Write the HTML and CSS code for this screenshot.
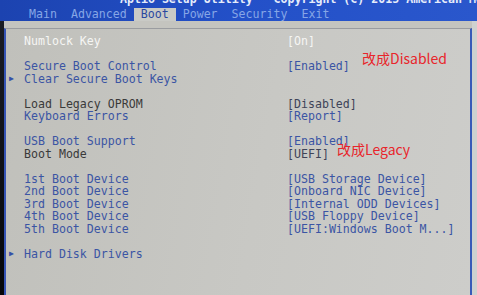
FILE: index.html
```html
<!DOCTYPE html>
<html lang="en">
<head>
<meta charset="utf-8">
<title>Aptio Setup Utility - Boot</title>
<link rel="stylesheet" href="styles.css">
</head>
<body>
<div class="screen">
  <header class="top">
    <div class="title">Aptio Setup Utility - Copyright (C) 2015 American Megatrends, Inc.</div>
    <nav class="tabs">
      <span class="tab">Main</span>
      <span class="tab">Advanced</span>
      <span class="tab active">Boot</span>
      <span class="tab">Power</span>
      <span class="tab">Security</span>
      <span class="tab">Exit</span>
    </nav>
  </header>
  <div class="body">
    <div class="bezel"></div>
    <main class="panel">
      <div class="list">
        <div class="row white"><span class="arrow"></span><span class="label">Numlock Key</span><span class="value">[On]</span></div>
        <div class="gap"></div>
        <div class="row blue"><span class="arrow"></span><span class="label">Secure Boot Control</span><span class="value">[Enabled]</span></div>
        <div class="row blue"><span class="arrow">&#9654;</span><span class="label">Clear Secure Boot Keys</span><span class="value"></span></div>
        <div class="gap"></div>
        <div class="row dark"><span class="arrow"></span><span class="label">Load Legacy OPROM</span><span class="value">[Disabled]</span></div>
        <div class="row blue"><span class="arrow"></span><span class="label">Keyboard Errors</span><span class="value">[Report]</span></div>
        <div class="gap"></div>
        <div class="row blue"><span class="arrow"></span><span class="label">USB Boot Support</span><span class="value">[Enabled]</span></div>
        <div class="row dark"><span class="arrow"></span><span class="label">Boot Mode</span><span class="value">[UEFI]</span></div>
        <div class="gap"></div>
        <div class="row blue"><span class="arrow"></span><span class="label">1st Boot Device</span><span class="value">[USB Storage Device]</span></div>
        <div class="row blue"><span class="arrow"></span><span class="label">2nd Boot Device</span><span class="value">[Onboard NIC Device]</span></div>
        <div class="row blue"><span class="arrow"></span><span class="label">3rd Boot Device</span><span class="value">[Internal ODD Devices]</span></div>
        <div class="row blue"><span class="arrow"></span><span class="label">4th Boot Device</span><span class="value">[USB Floppy Device]</span></div>
        <div class="row blue"><span class="arrow"></span><span class="label">5th Boot Device</span><span class="value">[UEFI:Windows Boot M...]</span></div>
        <div class="gap"></div>
        <div class="row blue"><span class="arrow">&#9654;</span><span class="label">Hard Disk Drivers</span><span class="value"></span></div>
      </div>
      <span class="note note-secure">改成Disabled</span>
      <span class="note note-mode">改成Legacy</span>
    </main>
    <div class="edge"></div>
  </div>
</div>
</body>
</html>
```
FILE: styles.css
```css
* { box-sizing: border-box; }
html, body { margin: 0; padding: 0; }
body {
  width: 477px;
  height: 295px;
  overflow: hidden;
  background: #c4c4bf;
  font-family: "DejaVu Sans Mono", "Liberation Mono", monospace;
  font-size: 11.6px;
}
.screen { width: 477px; height: 295px; display: flex; flex-direction: column; }

.top {
  height: 21px;
  background: linear-gradient(90deg, #1c43b0 0%, #2350c8 50%, #2a57cc 100%);
  overflow: hidden;
  position: relative;
}
.title {
  margin-top: -7px;
  height: 12px;
  line-height: 12px;
  padding-left: 120px;
  color: #e6ecfa;
  white-space: nowrap;
  font-weight: bold;
}
.tabs {
  display: flex;
  padding-left: 22px;
  margin-top: 3px;
  height: 13px;
  line-height: 13px;
}
.tab { padding: 0 7px; color: #86a6e6; white-space: nowrap; }
.tab.active { background: #c9cac6; color: #2b48a0; }

.body { flex: 1; display: flex; }
.bezel { width: 4px; background: linear-gradient(180deg, #1a1c24, #050608); }
.panel {
  flex: 1;
  position: relative;
  margin-top: 7px;
  border-left: 2px solid #3553b4;
  border-top: 1px solid #9a9ca0;
  border-right: 2px solid #3a5ab8;
  background: linear-gradient(100deg, #c0c0bb 0%, #c8c8c4 55%, #cdcdca 100%);
  padding-top: 6px;
}
.edge { width: 5px; background: #cfd1d0; }

.list { display: flex; flex-direction: column; }
.row {
  display: grid;
  grid-template-columns: 18px 263px 1fr;
  height: 12.5px;
  line-height: 12.5px;
  white-space: nowrap;
}
.gap { height: 12.5px; }
.arrow { font-size: 8px; padding-left: 3px; color: #3550a8; }
.white .label, .white .value { color: #f6f6f4; }
.blue .label, .blue .value { color: #3b55a4; }
.dark .label { color: #3a3a3a; }
.dark .value { color: #3e4458; }

.note {
  position: absolute;
  font-family: "Noto Sans CJK SC", "Noto Sans", sans-serif;
  font-size: 14px;
  line-height: 16px;
  color: #e8252b;
  white-space: nowrap;
}
.note-secure { left: 356px; top: 21px; }
.note-mode { left: 331px; top: 112px; }
```
